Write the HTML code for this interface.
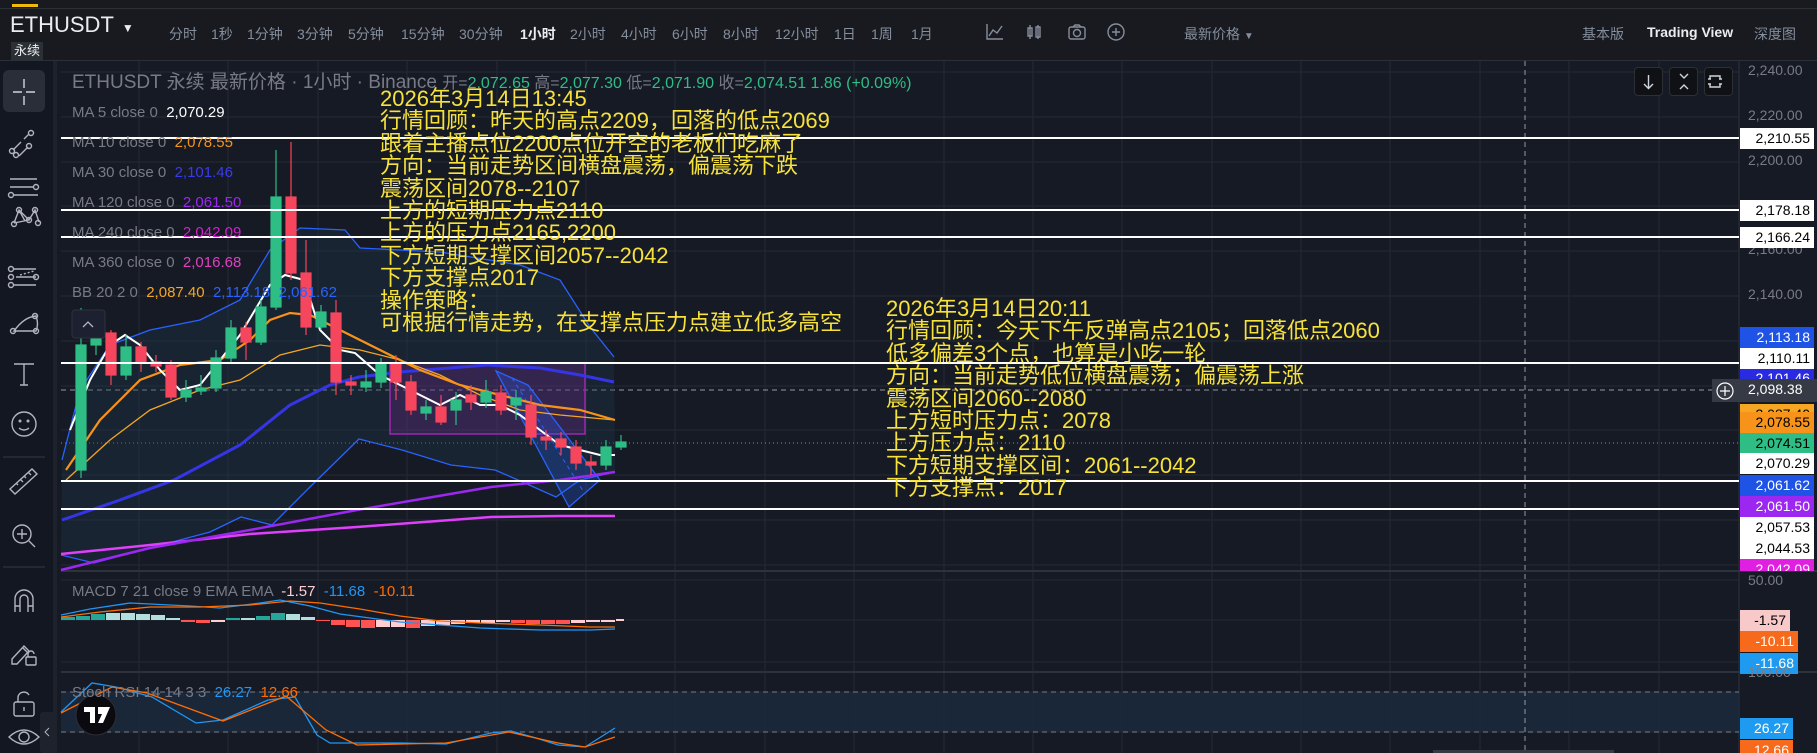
<!DOCTYPE html>
<html><head><meta charset="utf-8">
<style>
*{margin:0;padding:0;box-sizing:border-box}
body{width:1817px;height:753px;overflow:hidden;background:#161a25;font-family:"Liberation Sans","Noto Sans CJK SC",sans-serif;position:relative}
.a{position:absolute;white-space:nowrap}
.tf{position:absolute;top:24px;font-size:14px;color:#848e9c}
.lg{position:absolute;left:72px;font-size:15px;color:#787b86;line-height:18px;white-space:nowrap}
.ann{position:absolute;font-size:22px;line-height:22.4px;color:#f7e23c;font-family:"Liberation Sans","Noto Sans CJK SC",sans-serif;white-space:pre}
.pl{position:absolute;left:1740px;width:74px;height:21px;font-size:14px;line-height:21px;text-align:right;padding-right:4px;color:#000}
.ax{position:absolute;left:1748px;font-size:14px;color:#787b86}
.btn{position:absolute;top:67px;width:29px;height:29px;border:1px solid #2b2f36;border-radius:4px;background:#0f1115}
</style></head><body>
<div class="a" style="left:0;top:0;width:1817px;height:61px;background:#181a20;border-bottom:1px solid #2b2f36"></div>
<div class="a" style="left:0;top:8px;width:1817px;height:1px;background:#2b2f36"></div>
<div class="a" style="left:12px;top:4px;width:26px;height:3px;background:#f0b90b"></div>
<div class="a" style="left:10px;top:12px;font-size:22px;color:#eaecef;line-height:26px">ETHUSDT<span style="font-size:12px;margin-left:8px">▼</span></div>
<div class="a" style="left:11px;top:42px;font-size:13px;color:#eaecef;background:#2b2f36;padding:1px 3px;line-height:16px">永续</div>
<div class="tf" style="left:169px">分时</div><div class="tf" style="left:211px">1秒</div><div class="tf" style="left:247px">1分钟</div><div class="tf" style="left:297px">3分钟</div><div class="tf" style="left:348px">5分钟</div><div class="tf" style="left:401px">15分钟</div><div class="tf" style="left:459px">30分钟</div><div class="tf" style="left:520px;color:#eaecef;font-weight:bold">1小时</div><div class="tf" style="left:570px">2小时</div><div class="tf" style="left:621px">4小时</div><div class="tf" style="left:672px">6小时</div><div class="tf" style="left:723px">8小时</div><div class="tf" style="left:775px">12小时</div><div class="tf" style="left:834px">1日</div><div class="tf" style="left:871px">1周</div><div class="tf" style="left:911px">1月</div>
<svg class="a" style="left:985px;top:22px" width="160" height="20" fill="none" stroke="#848e9c" stroke-width="1.4">
<path d="M2 2v15h16M4 14l4-6 4 3 5-7"/>
<path d="M45 3v14M43 6h4v8h-4zM53 3v14M51 5h4v10h-4z"/>
<rect x="84" y="5" width="16" height="12" rx="2"/><circle cx="92" cy="11" r="3.5"/><path d="M88 5l2-2h4l2 2"/>
<circle cx="131" cy="10" r="8"/><path d="M131 6v8M127 10h8"/>
</svg>
<div class="tf" style="left:1184px">最新价格 <span style="font-size:10px">▼</span></div>
<div class="tf" style="left:1582px;top:24px">基本版</div>
<div class="tf" style="left:1647px;top:24px;color:#eaecef;font-weight:bold">Trading View</div>
<div class="tf" style="left:1754px;top:24px">深度图</div>

<div class="a" style="left:0;top:61px;width:57px;height:692px;background:#131722;border-right:4px solid #1e222d"></div>
<div class="a" style="left:3px;top:70px;width:42px;height:42px;background:#2a2e39;border-radius:6px"></div>
<svg class="a" style="left:0;top:61px" width="57" height="692" fill="none" stroke="#b2b5be" stroke-width="1.4">
<path d="M24 18v9M24 35v9M13 31h9M26 31h9" stroke="#d1d4dc"/>
<path d="M13 89l8-8M19 95l9-9M29 73l-5 5"/><circle cx="12" cy="90" r="2.5"/><circle cx="31" cy="72" r="2.5"/>
<circle cx="29" cy="85" r="2.5"/><circle cx="16" cy="94" r="2.5"/>
<path d="M10 118h27M10 126h24M13 134h25"/><circle cx="36" cy="126" r="2.5"/><circle cx="11" cy="134" r="2.5"/>
<path d="M14 162l5-13 10 10 6-10 4 12M19 149l6 11M14 162l15-3"/><circle cx="14" cy="163" r="2.5"/><circle cx="19" cy="149" r="2.5"/><circle cx="29" cy="159" r="2.5"/><circle cx="35" cy="149" r="2.5"/><circle cx="38" cy="162" r="2.5"/>
<path d="M14 208h22M16 216h20M14 224h22" /><path d="M20 214l14-4" stroke-dasharray="2 2"/><circle cx="11" cy="208" r="2.5"/><circle cx="11" cy="216" r="2.5"/><circle cx="11" cy="224" r="2.5"/><circle cx="36" cy="216" r="2.5"/>
<path d="M14 270q10-14 22-15q3 8 0 15z"/><circle cx="13" cy="270" r="2.5"/><circle cx="35" cy="255" r="2.5"/><circle cx="36" cy="270" r="2.5"/>
<path d="M14 303h20M24 303v21M20 324h8"/>
<circle cx="24" cy="363" r="12"/><circle cx="20" cy="360" r="0.8"/><circle cx="28" cy="360" r="0.8"/><path d="M19 367q5 4 10 0"/>
<path d="M3 396h42" stroke="#2a2e39"/>
<path d="M10 428l22-20 5 5-22 20zM16 422l2 2M20 418l3 3M24 415l2 2M28 411l3 3"/>
<circle cx="22" cy="473" r="9"/><path d="M22 468v10M17 473h10M29 480l6 6"/>
<path d="M3 506h42" stroke="#2a2e39"/>
<path d="M15 551v-13a9 9 0 0118 0v13M15 545h5M28 545h5M20 551v-13a4 4 0 018 0v13"/>
<path d="M12 598l12-13 5 5-12 13h-5zM23 587l4 4"/><rect x="26" y="596" width="10" height="8" rx="1"/><path d="M28 596v-3a3 3 0 016 0"/>
<rect x="14" y="641" width="20" height="14" rx="2"/><path d="M18 641v-5a6 6 0 0111-2M24 646v4"/>
<path d="M9 676q15-14 30 0q-15 14-30 0z"/><circle cx="24" cy="676" r="5"/>
</svg>

<svg class="a" style="left:0;top:0" width="1817" height="753">
<g stroke="#252935" stroke-width="1">
<path d="M139 61V753M228 61V753M318 61V753M407 61V753M497 61V753M586 61V753M675 61V753M765 61V753M854 61V753M944 61V753M1033 61V753M1122 61V753M1212 61V753M1301 61V753M1390 61V753M1480 61V753M1569 61V753M1659 61V753"/>
<path d="M61 72H1739M61 117H1739M61 162H1739M61 206H1739M61 251H1739M61 296H1739M61 341H1739M61 386H1739M61 430H1739M61 475H1739M61 520H1739M61 565H1739M61 580H1739M61 620H1739M61 662H1739M61 692H1739M61 732H1739"/>
</g>
<path d="M61 571H1817M61 672H1817" stroke="#2e323d" stroke-width="2"/>
<path d="M1739 61V753" stroke="#2e323d"/>
<rect x="61" y="692" width="1678" height="40" fill="#1b2a3e" opacity="0.8"/>
<path d="M61 692H1739M61 732H1739" stroke="#7a7e88" stroke-dasharray="5 4"/>
<path d="M1525 61V753" stroke="#9598a1" stroke-dasharray="5 4"/>
<path d="M61 390H1739" stroke="#9598a1" stroke-dasharray="5 4"/>
<path d="M61 443H1739" stroke="#2ebd85" stroke-dasharray="1 3"/>
<path d="M62 460L80 390L110 345L150 330L200 320L240 300L270 250L300 228L345 230L360 248L440 252L520 265L560 280L590 327L614 357L615 472L580 480L556 497L518 480L495 470L451 465L402 450L359 439L312 485L272 525L241 517L210 532L161 545L94 563L61 555Z" fill="#1d3a4a" opacity="0.35"/>
<polyline fill="none" stroke="#2962ff" stroke-width="1.3" points="62,460 80,390 110,345 150,330 200,320 240,300 270,250 300,228 345,230 360,248 440,252 520,265 560,280 590,327 614,357"/>
<polyline fill="none" stroke="#2962ff" stroke-width="1.3" points="61,555 94,563 161,545 210,532 241,517 272,525 312,485 359,439 402,450 451,465 495,470 518,480 556,497 580,480 615,472"/>
<rect x="390" y="363" width="195" height="71" fill="#9c27b0" fill-opacity="0.22" stroke="#9c27b0" stroke-width="1.5"/>
<path d="M496 371L528 385L600 480L569 507Z" fill="#2962ff" fill-opacity="0.25" stroke="#2962ff" stroke-width="1.3"/>
<path d="M512 378L585 494" stroke="#2962ff" stroke-dasharray="4 4"/>
<polyline fill="none" stroke="#e040fb" stroke-width="2.5" points="61,554 150,545 250,534 357,527 491,517 560,516 615,516"/>
<polyline fill="none" stroke="#9c27f0" stroke-width="2.5" points="61,570 150,548 250,530 357,510 491,487 560,480 615,472"/>
<polyline fill="none" stroke="#3535e6" stroke-width="3" points="62,520 120,500 174,480 240,445 290,405 330,385 359,377 400,372 487,365 540,368 580,375 614,382"/>
<polyline fill="none" stroke="#f5a623" stroke-width="1.3" points="66,480 110,440 150,410 200,390 240,380 280,355 320,345 360,350 400,360 440,375 480,395 520,410 560,415 615,420"/>
<polyline fill="none" stroke="#f7931a" stroke-width="2.2" points="66,470 100,420 140,380 180,365 220,360 250,340 270,320 290,313 310,315 340,330 380,350 420,370 460,385 500,395 540,405 580,410 615,420"/>
<polyline fill="none" stroke="#ffffff" stroke-width="2" points="70,430 90,380 110,345 125,335 140,345 160,370 180,390 200,385 220,360 240,335 255,310 270,285 285,275 304,280 320,330 340,350 355,353 380,375 400,385 420,395 440,405 460,395 480,405 500,405 520,415 540,430 560,445 580,450 600,455 615,455"/>
<g stroke-width="1.2">
<g stroke="#2ebd85" fill="#2ebd85"><path d="M81 308V478"/><rect x="76" y="345" width="10" height="125"/></g>
<g stroke="#2ebd85" fill="#2ebd85"><path d="M96 325V355"/><rect x="91" y="333" width="10" height="12"/></g>
<g stroke="#f6465d" fill="#f6465d"><path d="M111 330V385"/><rect x="106" y="333" width="10" height="42"/></g>
<g stroke="#2ebd85" fill="#2ebd85"><path d="M126 335V380"/><rect x="121" y="347" width="10" height="28"/></g>
<g stroke="#f6465d" fill="#f6465d"><path d="M141 342V372"/><rect x="136" y="347" width="10" height="15"/></g>
<g stroke="#f6465d" fill="#f6465d"><path d="M156 355V372"/><rect x="151" y="362" width="10" height="4"/></g>
<g stroke="#f6465d" fill="#f6465d"><path d="M171 360V400"/><rect x="166" y="365" width="10" height="32"/></g>
<g stroke="#2ebd85" fill="#2ebd85"><path d="M186 380V402"/><rect x="181" y="390" width="10" height="7"/></g>
<g stroke="#2ebd85" fill="#2ebd85"><path d="M201 375V395"/><rect x="196" y="388" width="10" height="3"/></g>
<g stroke="#2ebd85" fill="#2ebd85"><path d="M216 350V392"/><rect x="211" y="358" width="10" height="30"/></g>
<g stroke="#2ebd85" fill="#2ebd85"><path d="M231 320V362"/><rect x="226" y="328" width="10" height="30"/></g>
<g stroke="#f6465d" fill="#f6465d"><path d="M246 322V360"/><rect x="241" y="328" width="10" height="14"/></g>
<g stroke="#2ebd85" fill="#2ebd85"><path d="M261 300V345"/><rect x="256" y="307" width="10" height="35"/></g>
<g stroke="#2ebd85" fill="#2ebd85"><path d="M276 150V310"/><rect x="271" y="197" width="10" height="110"/></g>
<g stroke="#f6465d" fill="#f6465d"><path d="M291 142V280"/><rect x="286" y="197" width="10" height="76"/></g>
<g stroke="#f6465d" fill="#f6465d"><path d="M306 240V335"/><rect x="301" y="273" width="10" height="54"/></g>
<g stroke="#2ebd85" fill="#2ebd85"><path d="M321 305V330"/><rect x="316" y="312" width="10" height="15"/></g>
<g stroke="#f6465d" fill="#f6465d"><path d="M336 300V395"/><rect x="331" y="313" width="10" height="69"/></g>
<g stroke="#f6465d" fill="#f6465d"><path d="M351 375V395"/><rect x="346" y="382" width="10" height="3"/></g>
<g stroke="#2ebd85" fill="#2ebd85"><path d="M366 370V392"/><rect x="361" y="382" width="10" height="5"/></g>
<g stroke="#2ebd85" fill="#2ebd85"><path d="M381 358V388"/><rect x="376" y="363" width="10" height="19"/></g>
<g stroke="#f6465d" fill="#f6465d"><path d="M396 355V400"/><rect x="391" y="363" width="10" height="19"/></g>
<g stroke="#f6465d" fill="#f6465d"><path d="M411 375V415"/><rect x="406" y="382" width="10" height="28"/></g>
<g stroke="#2ebd85" fill="#2ebd85"><path d="M426 400V420"/><rect x="421" y="407" width="10" height="6"/></g>
<g stroke="#f6465d" fill="#f6465d"><path d="M441 395V425"/><rect x="436" y="407" width="10" height="15"/></g>
<g stroke="#2ebd85" fill="#2ebd85"><path d="M456 392V425"/><rect x="451" y="400" width="10" height="10"/></g>
<g stroke="#f6465d" fill="#f6465d"><path d="M471 385V410"/><rect x="466" y="395" width="10" height="7"/></g>
<g stroke="#2ebd85" fill="#2ebd85"><path d="M486 380V408"/><rect x="481" y="392" width="10" height="10"/></g>
<g stroke="#f6465d" fill="#f6465d"><path d="M501 385V415"/><rect x="496" y="393" width="10" height="17"/></g>
<g stroke="#2ebd85" fill="#2ebd85"><path d="M516 390V420"/><rect x="511" y="398" width="10" height="7"/></g>
<g stroke="#f6465d" fill="#f6465d"><path d="M531 395V445"/><rect x="526" y="405" width="10" height="32"/></g>
<g stroke="#f6465d" fill="#f6465d"><path d="M546 430V450"/><rect x="541" y="437" width="10" height="3"/></g>
<g stroke="#f6465d" fill="#f6465d"><path d="M561 432V455"/><rect x="556" y="439" width="10" height="8"/></g>
<g stroke="#f6465d" fill="#f6465d"><path d="M576 440V470"/><rect x="571" y="447" width="10" height="16"/></g>
<g stroke="#f6465d" fill="#f6465d"><path d="M591 455V475"/><rect x="586" y="462" width="10" height="3"/></g>
<g stroke="#2ebd85" fill="#2ebd85"><path d="M606 440V470"/><rect x="601" y="447" width="10" height="18"/></g>
<g stroke="#2ebd85" fill="#2ebd85"><path d="M621 435V450"/><rect x="616" y="442" width="10" height="5"/></g>
</g>
<path d="M61 138H1739M61 210H1739M61 237H1739M61 363H1739M61 481H1739M61 509H1739" stroke="#ffffff" stroke-width="2"/>
<g>
<rect x="61" y="617" width="14" height="3" fill="#26a69a"/><rect x="76" y="616" width="14" height="4" fill="#26a69a"/><rect x="91" y="614" width="14" height="6" fill="#26a69a"/><rect x="106" y="613" width="14" height="7" fill="#b2dfdb"/><rect x="121" y="613" width="14" height="7" fill="#b2dfdb"/><rect x="136" y="614" width="14" height="6" fill="#b2dfdb"/><rect x="151" y="615" width="14" height="5" fill="#b2dfdb"/><rect x="166" y="618" width="14" height="2" fill="#b2dfdb"/>
<rect x="181" y="620" width="14" height="2" fill="#ff5252"/><rect x="196" y="620" width="14" height="3" fill="#ff5252"/><rect x="211" y="620" width="14" height="2" fill="#ffcdd2"/>
<rect x="226" y="618" width="14" height="2" fill="#26a69a"/><rect x="241" y="618" width="14" height="2" fill="#b2dfdb"/><rect x="256" y="616" width="14" height="4" fill="#26a69a"/><rect x="271" y="613" width="14" height="7" fill="#26a69a"/><rect x="286" y="614" width="14" height="6" fill="#b2dfdb"/><rect x="301" y="617" width="14" height="3" fill="#b2dfdb"/>
<rect x="316" y="620" width="14" height="1" fill="#ff5252"/><rect x="331" y="620" width="14" height="5" fill="#ff5252"/><rect x="346" y="620" width="14" height="7" fill="#ff5252"/><rect x="361" y="620" width="14" height="8" fill="#ff5252"/><rect x="376" y="620" width="14" height="7" fill="#ffcdd2"/><rect x="391" y="620" width="14" height="7" fill="#ffcdd2"/><rect x="406" y="620" width="14" height="8" fill="#ff5252"/><rect x="421" y="620" width="14" height="6" fill="#ffcdd2"/><rect x="436" y="620" width="14" height="5" fill="#ffcdd2"/><rect x="451" y="620" width="14" height="4" fill="#ffcdd2"/><rect x="466" y="620" width="14" height="3" fill="#ffcdd2"/><rect x="481" y="620" width="14" height="3" fill="#ffcdd2"/><rect x="496" y="620" width="14" height="2" fill="#ffcdd2"/><rect x="511" y="620" width="14" height="3" fill="#ff5252"/><rect x="526" y="620" width="14" height="4" fill="#ff5252"/><rect x="541" y="620" width="14" height="4" fill="#ff5252"/><rect x="556" y="620" width="14" height="4" fill="#ff5252"/><rect x="571" y="620" width="14" height="3" fill="#ffcdd2"/><rect x="586" y="620" width="14" height="2" fill="#ffcdd2"/><rect x="601" y="620" width="14" height="2" fill="#ffcdd2"/><rect x="616" y="619" width="8" height="2" fill="#ffcdd2"/>
</g>
<polyline fill="none" stroke="#2196f3" stroke-width="1.3" points="61,615 90,609 130,603 190,606 220,608 260,603 280,600 310,606 340,614 400,622 440,625 480,628 540,630 590,630 615,629"/>
<polyline fill="none" stroke="#ff6d00" stroke-width="1.3" points="61,617 100,612 150,607 200,607 250,605 290,601 320,603 360,609 400,616 440,621 480,623 540,625 590,627 615,627"/>
<polyline fill="none" stroke="#2196f3" stroke-width="1.3" points="61,712 92,683 116,687 152,697 196,723 223,720 268,700 295,697 317,735 330,743 402,743 446,744 491,733 511,731 536,738 558,745 585,747 615,728"/>
<polyline fill="none" stroke="#ff6d00" stroke-width="1.3" points="61,713 112,687 147,693 223,721 286,696 326,730 357,745 446,743 509,732 558,743 585,747 615,737"/>
<circle cx="96" cy="715" r="20" fill="#0b0b0f" stroke="#2a2e39"/>
<path d="M84 707h11v16h-5v-11h-6zM98 707h12l-7 16h-5l4-9h-4z" fill="#fff"/>
<rect x="72" y="310" width="33" height="28" rx="3" fill="#1c2030" stroke="#2e323d"/>
<path d="M83 327l5-5 5 5" stroke="#b2b5be" fill="none" stroke-width="1.3"/>
<rect x="1433" y="750" width="181" height="3" fill="#363a45"/>
<rect x="40" y="712" width="14" height="41" rx="3" fill="#1e222d"/>
<path d="M49 728l-4 4 4 4" stroke="#b2b5be" fill="none"/>
</svg>

<div class="lg" style="top:72px;font-size:19px;line-height:22px">ETHUSDT 永续 最新价格 · 1小时 · Binance <span style="font-size:16px">开=<span style="color:#2ebd85">2,072.65</span> 高=<span style="color:#2ebd85">2,077.30</span> 低=<span style="color:#2ebd85">2,071.90</span> 收=<span style="color:#2ebd85">2,074.51</span> <span style="color:#2ebd85">1.86 (+0.09%)</span></span></div>
<div class="lg" style="top:104px">MA 5 close 0 &nbsp;<span style="color:#fff">2,070.29</span></div>
<div class="lg" style="top:134px">MA 10 close 0 &nbsp;<span style="color:#f7931a">2,078.55</span></div>
<div class="lg" style="top:164px">MA 30 close 0 &nbsp;<span style="color:#3a3af0">2,101.46</span></div>
<div class="lg" style="top:194px">MA 120 close 0 &nbsp;<span style="color:#9c27f0">2,061.50</span></div>
<div class="lg" style="top:224px">MA 240 close 0 &nbsp;<span style="color:#d020d0">2,042.09</span></div>
<div class="lg" style="top:254px">MA 360 close 0 &nbsp;<span style="color:#e040c0">2,016.68</span></div>
<div class="lg" style="top:284px">BB 20 2 0 &nbsp;<span style="color:#f5a623">2,087.40</span> &nbsp;<span style="color:#2962ff">2,113.18</span> &nbsp;<span style="color:#2962ff">2,061.62</span></div>
<div class="lg" style="top:583px">MACD 7 21 close 9 EMA EMA &nbsp;<span style="color:#ffcdd2">-1.57</span> &nbsp;<span style="color:#2196f3">-11.68</span> &nbsp;<span style="color:#ff6d00">-10.11</span></div>
<div class="lg" style="top:684px">Stoch RSI 14 14 3 3 &nbsp;<span style="color:#2196f3">26.27</span> &nbsp;<span style="color:#ff6d00">12.66</span></div>

<div class="ann" style="left:380px;top:88px">2026年3月14日13:45
行情回顾：昨天的高点2209，回落的低点2069
跟着主播点位2200点位开空的老板们吃麻了
方向：当前走势区间横盘震荡，偏震荡下跌
震荡区间2078--2107
上方的短期压力点2110
上方的压力点2165,2200
下方短期支撑区间2057--2042
下方支撑点2017
操作策略：
可根据行情走势，在支撑点压力点建立低多高空</div>
<div class="ann" style="left:886px;top:298px">2026年3月14日20:11
行情回顾：今天下午反弹高点2105；回落低点2060
低多偏差3个点，也算是小吃一轮
方向：当前走势低位横盘震荡；偏震荡上涨
震荡区间2060--2080
上方短时压力点：2078
上方压力点：2110
下方短期支撑区间：2061--2042
下方支撑点：2017</div>

<div class="btn" style="left:1634px"></div><div class="btn" style="left:1669px"></div><div class="btn" style="left:1704px"></div>
<svg class="a" style="left:1634px;top:67px" width="100" height="29" fill="none" stroke="#d1d4dc" stroke-width="1.4">
<path d="M14.5 8v13M10 17l4.5 4.5 4.5-4.5"/>
<path d="M46 7l4 4 4-4M46 22l4-4 4 4"/>
<path d="M76 12v-3h10v3M76 17v3h10v-3M74 12h3M85 12h3M74 17h3M85 17h3"/>
</svg>

<div class="ax" style="top:62px">2,240.00</div>
<div class="ax" style="top:107px">2,220.00</div>
<div class="ax" style="top:152px">2,200.00</div>
<div class="ax" style="top:241px">2,160.00</div>
<div class="ax" style="top:286px">2,140.00</div>
<div class="pl" style="top:128px;background:#fff">2,210.55</div>
<div class="pl" style="top:200px;background:#fff">2,178.18</div>
<div class="pl" style="top:227px;background:#fff">2,166.24</div>
<div class="pl" style="top:327px;background:#1e53e5;color:#fff">2,113.18</div>
<div class="pl" style="top:368px;background:#2a2ae0;color:#fff">2,101.46</div>
<div class="pl" style="top:348px;background:#fff">2,110.11</div>
<div class="pl" style="top:404px;background:#f5a623">2,087.40</div>
<div class="pl" style="top:412px;background:#f7931a">2,078.55</div>
<div class="pl" style="top:433px;background:#2ebd85">2,074.51</div>
<div class="pl" style="top:453px;background:#fff">2,070.29</div>
<div class="pl" style="top:475px;background:#1e53e5;color:#fff">2,061.62</div>
<div class="pl" style="top:496px;background:#9c27f0;color:#fff">2,061.50</div>
<div class="pl" style="top:517px;background:#fff">2,057.53</div>
<div class="pl" style="top:538px;background:#fff">2,044.53</div>
<div class="pl" style="top:559px;background:#e020e0;color:#fff;height:12px;overflow:hidden;line-height:21px">2,042.09</div>
<div class="a" style="left:1712px;top:379px;width:105px;height:23px;background:#363a45"></div>
<svg class="a" style="left:1715px;top:381px" width="20" height="20" fill="none" stroke="#fff" stroke-width="1.2"><circle cx="10" cy="10" r="8"/><path d="M10 5v10M5 10h10"/></svg>
<div class="a" style="left:1748px;top:381px;font-size:14px;color:#fff">2,098.38</div>
<div class="ax" style="top:572px">50.00</div>
<div class="pl" style="top:610px;width:50px;background:#f8c9c9">-1.57</div>
<div class="pl" style="top:631px;width:58px;background:#f76a1c;color:#fff">-10.11</div>
<div class="pl" style="top:653px;width:58px;background:#1e9bf0;color:#fff">-11.68</div>
<div class="ax" style="top:668px;height:12px;overflow:hidden;line-height:8px">100.00</div>
<div class="pl" style="top:718px;width:53px;background:#1e9bf0;color:#fff">26.27</div>
<div class="pl" style="top:740px;width:53px;height:13px;overflow:hidden;background:#f76a1c;color:#fff">12.66</div>
</body></html>
